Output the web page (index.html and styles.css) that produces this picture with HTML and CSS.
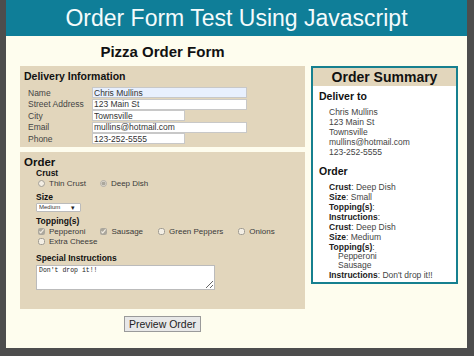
FILE: index.html
```html
<!DOCTYPE html>
<html lang="en">
<head>
  <meta charset="UTF-8">
  <title>Order Form Test Using Javascript</title>
  <link rel="stylesheet" href="styles.css">
</head>
<body>
  <div class="window">
    <header class="page-header">
      <h1>Order Form Test Using Javascript</h1>
    </header>

    <div class="page-main">
      <h2 class="form-title">Pizza Order Form</h2>

      <form class="order-form" id="order-form">
        <fieldset class="panel delivery">
          <h3 class="panel-h">Delivery Information</h3>
          <div class="field-grid">
            <label for="name">Name</label>
            <input id="name" class="input-long autofill" type="text" value="Chris Mullins">
            <label for="street">Street Address</label>
            <input id="street" class="input-long" type="text" value="123 Main St">
            <label for="city">City</label>
            <input id="city" class="input-short" type="text" value="Townsville">
            <label for="email">Email</label>
            <input id="email" class="input-long" type="text" value="mullins@hotmail.com">
            <label for="phone">Phone</label>
            <input id="phone" class="input-short" type="text" value="123-252-5555">
          </div>
        </fieldset>

        <fieldset class="panel order">
          <h3 class="panel-h order-h">Order</h3>
          <div class="order-body">
            <div class="group-label">Crust</div>
            <div class="choice-row crust">
              <label class="choice"><input type="radio" name="crust"> Thin Crust</label>
              <label class="choice"><input type="radio" name="crust" checked> Deep Dish</label>
            </div>

            <div class="group-label">Size</div>
            <div class="select-wrap">
              <select class="size-select">
                <option>Small</option>
                <option selected>Medium</option>
                <option>Large</option>
              </select>
            </div>

            <div class="group-label">Topping(s)</div>
            <div class="choice-row toppings">
              <label class="choice"><input type="checkbox" checked> Pepperoni</label>
              <label class="choice"><input type="checkbox" checked> Sausage</label>
              <label class="choice"><input type="checkbox"> Green Peppers</label>
              <label class="choice"><input type="checkbox"> Onions</label>
              <label class="choice"><input type="checkbox"> Extra Cheese</label>
            </div>

            <div class="group-label instructions-label">Special Instructions</div>
            <textarea class="instructions">Don't drop it!!</textarea>
          </div>
        </fieldset>

        <div class="button-row">
          <button type="button" class="preview-button">Preview Order</button>
        </div>
      </form>

      <aside class="summary">
        <h2 class="summary-title">Order Summary</h2>
        <div class="summary-body">
          <h3 class="summary-h">Deliver to</h3>
          <div class="summary-lines">
            <div>Chris Mullins</div>
            <div>123 Main St</div>
            <div>Townsville</div>
            <div>mullins@hotmail.com</div>
            <div>123-252-5555</div>
          </div>

          <h3 class="summary-h">Order</h3>
          <div class="summary-lines">
            <div><b>Crust</b>: Deep Dish</div>
            <div><b>Size</b>: Small</div>
            <div><b>Topping(s)</b>:</div>
            <div><b>Instructions</b>:</div>
            <div><b>Crust</b>: Deep Dish</div>
            <div><b>Size</b>: Medium</div>
            <div><b>Topping(s)</b>:</div>
            <ul class="topping-list">
              <li>Pepperoni</li>
              <li>Sausage</li>
            </ul>
            <div><b>Instructions</b>: Don't drop it!!</div>
          </div>
        </div>
      </aside>
    </div>
  </div>
</body>
</html>
```

FILE: styles.css
```css
* {
  box-sizing: border-box;
}

html,
body {
  margin: 0;
  height: 100%;
}

body {
  font-family: "Liberation Sans", Arial, sans-serif;
  background-color: #4d4d4d;
  color: #333;
  padding: 0 7px 8px 6px;
}

.window {
  height: 100%;
  background-color: #fefdee;
  display: flex;
  flex-direction: column;
}

.page-header {
  background-color: #0f7e98;
  height: 36px;
  display: flex;
  align-items: center;
  justify-content: center;
}

.page-header h1 {
  margin: 0;
  color: #f4fbfc;
  font-weight: normal;
  font-size: 23px;
  line-height: 1;
}

.page-main {
  display: grid;
  grid-template-columns: 285px 147px;
  grid-template-areas:
    "title ."
    "form summary";
  column-gap: 6px;
  padding: 0 9px 0 14px;
  align-items: start;
}

.form-title {
  grid-area: title;
  margin: 8px 0 6px;
  text-align: center;
  font-size: 15px;
  color: #111;
  line-height: 16px;
}

/* Left column form */
.order-form {
  grid-area: form;
  display: flex;
  flex-direction: column;
  gap: 5px;
}

.panel {
  margin: 0;
  border: none;
  background-color: #e2d6bc;
  padding: 4px;
}

.panel-h {
  margin: 0 0 5px;
  font-size: 10.5px;
  line-height: 12px;
  color: #111;
}

.field-grid {
  display: grid;
  grid-template-columns: 64px auto;
  grid-auto-rows: 11.5px;
  padding-left: 4px;
  align-items: center;
  justify-items: start;
}

.field-grid label {
  font-size: 8.5px;
  color: #444;
}

.field-grid input {
  font-family: "Liberation Sans", Arial, sans-serif;
  font-size: 8.5px;
  height: 11px;
  padding: 0 1px;
  border: 1px solid #c8c8c8;
  background-color: #fff;
  color: #333;
}

.input-long {
  width: 155px;
}

.input-short {
  width: 93px;
}

.autofill {
  background-color: #e8f0fe !important;
}

.delivery {
  padding-bottom: 2px;
}

.order {
  padding-bottom: 19px;
}

.order-h {
  font-size: 11.5px;
  margin-bottom: 0;
}

.order-body {
  padding-left: 12px;
}

.group-label {
  font-size: 8.5px;
  font-weight: bold;
  color: #111;
  line-height: 10px;
  margin-top: 4px;
}

.group-label:first-child {
  margin-top: 0;
}

.instructions-label {
  margin-top: 7px;
}

.choice-row {
  display: flex;
  flex-wrap: wrap;
  align-items: center;
  margin-top: 1px;
}

.choice {
  display: flex;
  align-items: center;
  font-size: 8px;
  color: #3a3a3a;
  line-height: 9.5px;
  margin-right: 13px;
}

.choice input {
  margin: 0 4px 0 2px;
  width: 7px;
  height: 7px;
  opacity: 0.6;
  accent-color: #888;
}

.crust .choice:first-child {
  margin-right: 12px;
}

.toppings .choice:nth-child(3) {
  margin-right: 13px;
}

.toppings .choice:last-child {
  width: 100%;
}

.select-wrap {
  position: relative;
  width: 45px;
  margin-top: 1px;
}

.select-wrap::after {
  content: "\25BE";
  position: absolute;
  right: 6px;
  top: 0;
  font-size: 7px;
  line-height: 9px;
  color: #222;
  pointer-events: none;
}

.size-select {
  display: block;
  appearance: none;
  -webkit-appearance: none;
  width: 45px;
  height: 9px;
  font-size: 6px;
  line-height: 7px;
  padding: 0 2px;
  border: 1px solid #bbb;
  border-radius: 1px;
  background-color: #fff;
  color: #333;
  font-family: "Liberation Sans", Arial, sans-serif;
}

.instructions {
  display: block;
  margin-top: 2px;
  width: 179px;
  height: 25px;
  resize: both;
  font-family: "Liberation Mono", "Courier New", monospace;
  font-size: 6.5px;
  padding: 1px 2px;
  border: 1px solid #bbb;
  color: #222;
}

.button-row {
  display: flex;
  justify-content: center;
  margin-top: 2px;
}

.preview-button {
  font-family: "Liberation Sans", Arial, sans-serif;
  font-size: 10.5px;
  padding: 1px 4px;
  height: 16px;
  background-color: #e8e8e8;
  border: 1px solid #9a9a9a;
  color: #222;
}

/* Right column summary */
.summary {
  grid-area: summary;
  border: 2px solid #16808f;
  background-color: #fff;
  height: 218px;
}

.summary-title {
  margin: 0;
  background-color: #e2d6bc;
  text-align: center;
  font-size: 14px;
  line-height: 18px;
  color: #111;
}

.summary-body {
  padding: 4px 6px;
}

.summary-h {
  margin: 0 0 4px;
  font-size: 10.5px;
  line-height: 13px;
  color: #111;
}

.summary-lines {
  padding-left: 10px;
  font-size: 8.5px;
  line-height: 10px;
  color: #444;
  margin-bottom: 8px;
}

.summary-lines b {
  color: #222;
}

.topping-list {
  list-style: none;
  margin: 0;
  padding-left: 9px;
  line-height: 9px;
}
```
